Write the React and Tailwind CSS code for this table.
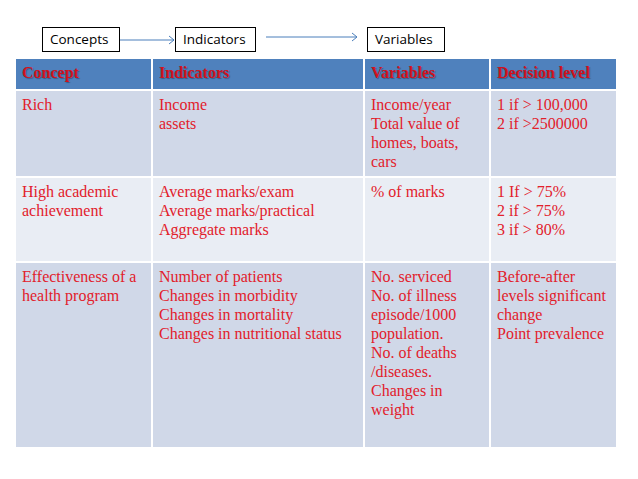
const rows = [
  {
    bg: "bg-[#d0d8e8]",
    h: "h-[85px]",
    cells: [
      ["Rich"],
      ["Income", "assets"],
      ["Income/year", "Total value of", "homes, boats,", "cars"],
      ["1 if > 100,000", "2 if >2500000"],
    ],
  },
  {
    bg: "bg-[#e9edf4]",
    h: "h-[83px]",
    cells: [
      ["High academic", "achievement"],
      ["Average marks/exam", "Average marks/practical", "Aggregate marks"],
      ["% of marks"],
      ["1 If > 75%", "2 if > 75%", "3 if > 80%"],
    ],
  },
  {
    bg: "bg-[#d0d8e8]",
    h: "h-[184px]",
    cells: [
      ["Effectiveness of a", "health program"],
      ["Number of patients", "Changes in morbidity", "Changes in mortality", "Changes in nutritional status"],
      ["No. serviced", "No. of illness", "episode/1000", "population.", "No. of deaths", "/diseases.", "Changes in", "weight"],
      ["Before-after", "levels significant", "change", "Point prevalence"],
    ],
  },
];

const headers = ["Concept", "Indicators", "Variables", "Decision level"];

function Arrow({ width, y }) {
  return (
    <svg width={width} height="25" className="shrink-0">
      <line x1="0" y1={y} x2={width - 1} y2={y} stroke="#4a7ebb" strokeWidth="1" />
      <polyline points={`${width - 6},${y - 4} ${width - 1},${y} ${width - 6},${y + 4}`} fill="none" stroke="#4a7ebb" strokeWidth="1" />
    </svg>
  );
}

function Box({ label, w }) {
  return (
    <div className={`${w} h-[25px] border border-black bg-white flex items-center pl-[7px] text-[13.5px] text-black shrink-0`}>
      {label}
    </div>
  );
}

export default function App() {
  return (
    <div className="w-[638px] h-[479px] bg-white overflow-hidden font-['Open_Sans',sans-serif]">
      <div className="flex items-start pt-[27px] pl-[42px]">
        <Box label="Concepts" w="w-[78px]" />
        <Arrow width={55} y={13} />
        <Box label="Indicators" w="w-[81px]" />
        <div className="w-[10px] shrink-0" />
        <Arrow width={92} y={10} />
        <div className="w-[9px] shrink-0" />
        <Box label="Variables" w="w-[78px]" />
      </div>

      <div className="ml-[16px] mt-[7px] w-[600px] grid grid-cols-[135px_210px_124px_125px] gap-[2px] bg-white font-['Liberation_Serif',serif]">
        {headers.map((h) => (
          <div
            key={h}
            className="h-[30px] bg-[#4f81bd] pl-[6px] pb-[3px] flex items-center text-[16px] font-bold text-[#d0111c] [text-shadow:1px_1px_1px_rgba(0,0,0,0.3)]"
          >
            {h}
          </div>
        ))}
        {rows.map((r, i) =>
          r.cells.map((lines, j) => (
            <div
              key={`${i}-${j}`}
              className={`${r.bg} ${r.h} pl-[6px] pt-[4px] text-[16px] leading-[19px] text-[#e2202b]`}
            >
              {lines.map((l) => (
                <div key={l} className="whitespace-nowrap">
                  {l}
                </div>
              ))}
            </div>
          ))
        )}
      </div>
    </div>
  );
}
